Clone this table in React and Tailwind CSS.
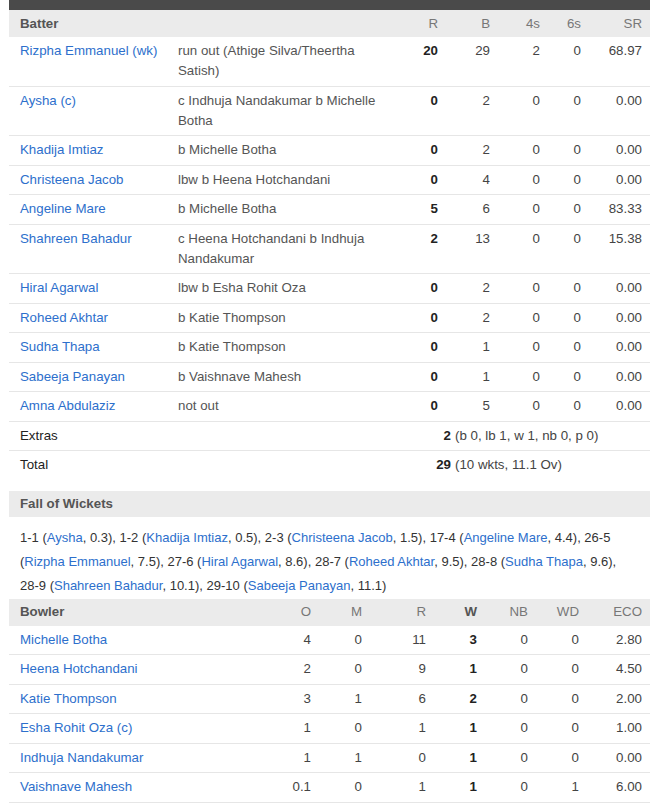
import React from "react";

const batters = [
    { name: "Rizpha Emmanuel (wk)", how: "run out (Athige Silva/Theertha Satish)", r: 20, b: 29, f: 2, s: 0, sr: "68.97" },
    { name: "Aysha (c)", how: "c Indhuja Nandakumar b Michelle Botha", r: 0, b: 2, f: 0, s: 0, sr: "0.00" },
    { name: "Khadija Imtiaz", how: "b Michelle Botha", r: 0, b: 2, f: 0, s: 0, sr: "0.00" },
    { name: "Christeena Jacob", how: "lbw b Heena Hotchandani", r: 0, b: 4, f: 0, s: 0, sr: "0.00" },
    { name: "Angeline Mare", how: "b Michelle Botha", r: 5, b: 6, f: 0, s: 0, sr: "83.33" },
    { name: "Shahreen Bahadur", how: "c Heena Hotchandani b Indhuja Nandakumar", r: 2, b: 13, f: 0, s: 0, sr: "15.38" },
    { name: "Hiral Agarwal", how: "lbw b Esha Rohit Oza", r: 0, b: 2, f: 0, s: 0, sr: "0.00" },
    { name: "Roheed Akhtar", how: "b Katie Thompson", r: 0, b: 2, f: 0, s: 0, sr: "0.00" },
    { name: "Sudha Thapa", how: "b Katie Thompson", r: 0, b: 1, f: 0, s: 0, sr: "0.00" },
    { name: "Sabeeja Panayan", how: "b Vaishnave Mahesh", r: 0, b: 1, f: 0, s: 0, sr: "0.00" },
    { name: "Amna Abdulaziz", how: "not out", r: 0, b: 5, f: 0, s: 0, sr: "0.00" },
];

const wickets = [
    ["1-1", "Aysha", "0.3"],
    ["1-2", "Khadija Imtiaz", "0.5"],
    ["2-3", "Christeena Jacob", "1.5"],
    ["17-4", "Angeline Mare", "4.4"],
    ["26-5", "Rizpha Emmanuel", "7.5"],
    ["27-6", "Hiral Agarwal", "8.6"],
    ["28-7", "Roheed Akhtar", "9.5"],
    ["28-8", "Sudha Thapa", "9.6"],
    ["28-9", "Shahreen Bahadur", "10.1"],
    ["29-10", "Sabeeja Panayan", "11.1"],
];

const bowlers = [
    { name: "Michelle Botha", o: "4", m: 0, r: 11, w: 3, nb: 0, wd: 0, eco: "2.80" },
    { name: "Heena Hotchandani", o: "2", m: 0, r: 9, w: 1, nb: 0, wd: 0, eco: "4.50" },
    { name: "Katie Thompson", o: "3", m: 1, r: 6, w: 2, nb: 0, wd: 0, eco: "2.00" },
    { name: "Esha Rohit Oza (c)", o: "1", m: 0, r: 1, w: 1, nb: 0, wd: 0, eco: "1.00" },
    { name: "Indhuja Nandakumar", o: "1", m: 1, r: 0, w: 1, nb: 0, wd: 0, eco: "0.00" },
    { name: "Vaishnave Mahesh", o: "0.1", m: 0, r: 1, w: 1, nb: 0, wd: 1, eco: "6.00" },
];

const batGrid = "grid grid-cols-[158px_212px_48px_52px_50px_41px_61px] pl-[11px] pr-[8px] text-[13.3px]";
const bowlGrid = "grid grid-cols-[240px_51px_51px_64px_51px_51px_51px_63px] pl-[11px] pr-[8px] text-[13.3px]";
const row = "border-b border-[#e6e6e6] py-[4.25px] leading-[20px]";

export default function App() {
    return (
        <div className="bg-white min-h-[812px] pl-[9px] text-[13px] text-[#333] font-['Liberation_Sans',Arial,sans-serif]">
            <div className="h-[10px] bg-[#4a4a4a]" />

            {/* Batting */}
            <div className={`${batGrid} bg-[#ebebeb] h-[27px] items-center text-[#777]`}>
                <div className="font-bold text-[#555]">Batter</div>
                <div />
                <div className="text-right">R</div>
                <div className="text-right">B</div>
                <div className="text-right">4s</div>
                <div className="text-right">6s</div>
                <div className="text-right">SR</div>
            </div>
            {batters.map((p, i) => (
                <div key={i} className={`${batGrid} ${row}`}>
                    <div className="text-[#2d6fcc]">{p.name}</div>
                    <div className="text-[#555] pr-[6px]">{p.how}</div>
                    <div className="text-right font-bold text-[#222]">{p.r}</div>
                    <div className="text-right text-[#444]">{p.b}</div>
                    <div className="text-right text-[#444]">{p.f}</div>
                    <div className="text-right text-[#444]">{p.s}</div>
                    <div className="text-right text-[#444]">{p.sr}</div>
                </div>
            ))}
            <div className={`${batGrid} ${row}`}>
                <div className="text-[#222]">Extras</div>
                <div />
                <div className="col-span-5 flex text-[#444]">
                    <span className="w-[61px] text-right font-bold text-[#222]">2</span>
                    <span className="ml-[4px]">(b 0, lb 1, w 1, nb 0, p 0)</span>
                </div>
            </div>
            <div className={`${batGrid} py-[4.25px] leading-[20px]`}>
                <div className="text-[#222]">Total</div>
                <div />
                <div className="col-span-5 flex text-[#444]">
                    <span className="w-[61px] text-right font-bold text-[#222]">29</span>
                    <span className="ml-[4px]">(10 wkts, 11.1 Ov)</span>
                </div>
            </div>

            {/* Fall of wickets */}
            <div className="mt-[11px] bg-[#ebebeb] h-[26px] flex items-center pl-[11px] text-[13.3px] font-bold text-[#555]">
                Fall of Wickets
            </div>
            <div className="pl-[11px] pr-[6px] pt-[9px] pb-[1px] leading-[24px] text-[#333]">
                {wickets.map(([score, name, over], i) => (
                    <span key={i}>
                        <span className="whitespace-nowrap">{score}</span> (<span className="text-[#2d6fcc]">{name}</span>, {over})
                        {i < wickets.length - 1 ? ", " : ""}
                    </span>
                ))}
            </div>

            {/* Bowling */}
            <div className={`${bowlGrid} bg-[#ebebeb] h-[27px] items-center text-[#777]`}>
                <div className="font-bold text-[#555]">Bowler</div>
                <div className="text-right">O</div>
                <div className="text-right">M</div>
                <div className="text-right">R</div>
                <div className="text-right font-bold text-[#555]">W</div>
                <div className="text-right">NB</div>
                <div className="text-right">WD</div>
                <div className="text-right">ECO</div>
            </div>
            {bowlers.map((b, i) => (
                <div key={i} className={`${bowlGrid} ${row}`}>
                    <div className="text-[#2d6fcc]">{b.name}</div>
                    <div className="text-right text-[#444]">{b.o}</div>
                    <div className="text-right text-[#444]">{b.m}</div>
                    <div className="text-right text-[#444]">{b.r}</div>
                    <div className="text-right font-bold text-[#222]">{b.w}</div>
                    <div className="text-right text-[#444]">{b.nb}</div>
                    <div className="text-right text-[#444]">{b.wd}</div>
                    <div className="text-right text-[#444]">{b.eco}</div>
                </div>
            ))}
        </div>
    );
}
